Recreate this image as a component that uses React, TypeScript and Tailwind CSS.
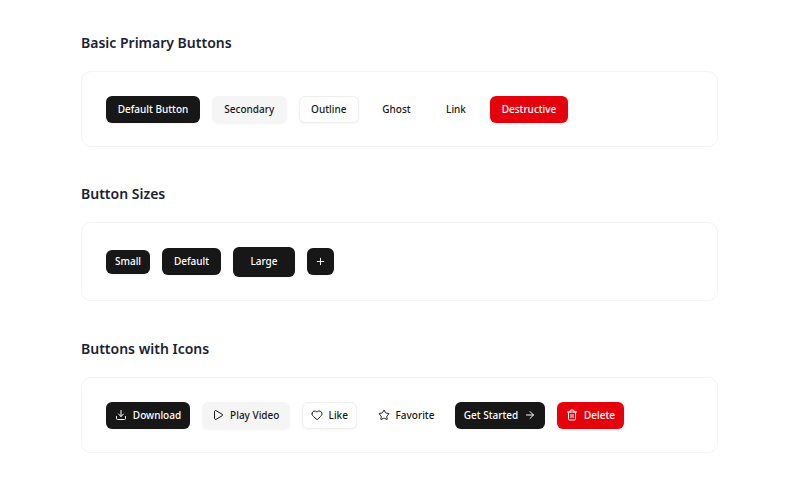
import { ArrowRight, Download, Heart, Play, Plus, Star, Trash2 } from "lucide-react";
import type { ReactNode } from "react";

const base = "inline-flex items-center justify-center gap-1.5 rounded-md text-[10px] font-medium whitespace-nowrap";
const primary = `${base} bg-[#171717] text-white shadow-xs`;
const secondary = `${base} bg-[#f5f5f5] text-[#171717] shadow-xs`;
const outline = `${base} bg-white text-[#171717] border border-[#efefef] shadow-xs`;
const ghost = `${base} text-[#171717]`;
const destructive = `${base} bg-[#e4020d] text-white shadow-xs`;

function Section({ title, children, className }: { title: string; children: ReactNode; className: string }) {
  return (
    <section className={className}>
      <h2 className="mb-4 text-sm leading-6 font-semibold text-[#1a2233]">{title}</h2>
      <div className="flex items-center gap-3 rounded-[10px] border border-[#f3f3f3] bg-white pl-6 pr-6 pt-[23.5px] pb-[23.5px]">{children}</div>
    </section>
  );
}

export default function App() {
  return (
    <div className="min-h-[500px] bg-white px-[81px] pt-[31px] font-['Noto_Sans',sans-serif]">
      <div className="w-[637px]">
        <Section title="Basic Primary Buttons" className="">
          <button className={`${primary} h-[27px] w-[94px]`}>Default Button</button>
          <button className={`${secondary} h-[27px] w-[74.5px]`}>Secondary</button>
          <button className={`${outline} h-[27px] w-[60.5px]`}>Outline</button>
          <button className={`${ghost} h-[27px] w-[51px]`}>Ghost</button>
          <button className={`${ghost} h-[27px] w-[44px]`}>Link</button>
          <button className={`${destructive} h-[27px] w-[78px]`}>Destructive</button>
        </Section>
        <Section title="Button Sizes" className="mt-[35px]">
          <button className={`${primary} h-[24px] w-[44px]`}>Small</button>
          <button className={`${primary} h-[27px] w-[59px]`}>Default</button>
          <button className={`${primary} h-[30px] w-[62px]`}>Large</button>
          <button className={`${primary} h-[27px] w-[27px]`}><Plus size={11} /></button>
        </Section>
        <Section title="Buttons with Icons" className="mt-[36px]">
          <button className={`${primary} h-[27px] w-[84px]`}><Download size={12} />Download</button>
          <button className={`${secondary} h-[27px] w-[87.5px]`}><Play size={12} />Play Video</button>
          <button className={`${outline} h-[27px] w-[55.5px]`}><Heart size={12} />Like</button>
          <button className={`${ghost} h-[27px] w-[74px]`}><Star size={12} />Favorite</button>
          <button className={`${primary} h-[27px] w-[90px]`}>Get Started<ArrowRight size={12} /></button>
          <button className={`${destructive} h-[27px] w-[67px]`}><Trash2 size={12} />Delete</button>
        </Section>
      </div>
    </div>
  );
}
